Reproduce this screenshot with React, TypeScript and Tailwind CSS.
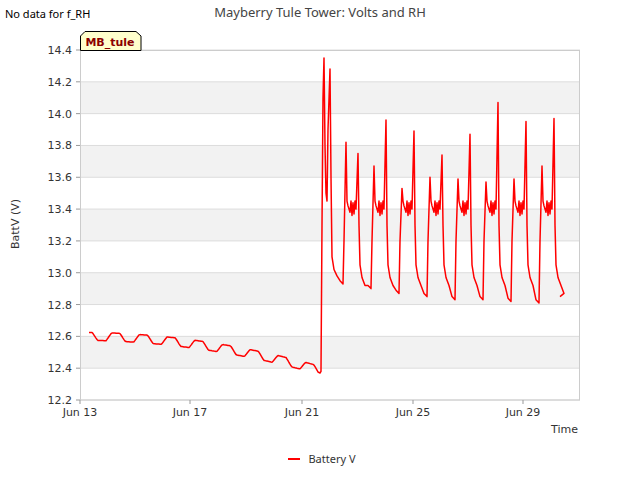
export default function App() {
  const Y = (v: number) => 400 - (v - 12.2) * (350 / 2.2);
  const pts: [number, number][] = [];
  for (let x = 89; x <= 318; x += 1) {
    const t = (x - 89) / (318 - 89);
    const base = 12.6 - 0.19 * t * t - 0.02 * t;
    const s = Math.sin(((x - 89) / 27.7) * 2 * Math.PI + 1.8);
    const w = 0.025 * Math.max(-0.6, Math.min(0.6, s)) / 0.6;
    pts.push([x, base + w]);
  }
  pts.push([320, 12.37], [321, 12.38], [322, 13.3], [323, 14.1], [324, 14.35], [325, 13.8], [326, 13.5], [327, 13.45], [328, 13.9], [330, 14.28], [331, 13.6], [332, 13.1], [334, 13.02], [337, 12.98], [340, 12.95], [343, 12.93]);
  const mins = [343, 371, 399, 427, 455, 483, 511, 539];
  const A = [13.82, 13.67, 13.53, 13.6, 13.59, 13.57, 13.59, 13.67];
  const B = [13.75, 13.96, 13.89, 13.74, 13.87, 14.07, 13.95, 13.97];
  const lows = [12.9, 12.87, 12.85, 12.83, 12.83, 12.82, 12.81, 12.85];
  mins.forEach((m, i) => {
    pts.push([m + 1, 13.2], [m + 3, A[i]], [m + 4, 13.45], [m + 5, 13.42], [m + 7, 13.38], [m + 8, 13.45], [m + 9, 13.36], [m + 10, 13.44], [m + 11, 13.37], [m + 12, 13.45], [m + 13, 13.4], [m + 15, B[i]], [m + 16, 13.3], [m + 17, 13.05], [m + 19, 12.97], [m + 22, 12.92], [m + 25, lows[i] + 0.02], [Math.min(m + 28, 560), lows[i]]);
  });
  const d = pts.map((p, i) => `${i ? "L" : "M"}${p[0]} ${Y(p[1]).toFixed(1)}`).join(" ");
  const ticks = [12.2, 12.4, 12.6, 12.8, 13.0, 13.2, 13.4, 13.6, 13.8, 14.0, 14.2, 14.4];
  const bands = [12.4, 12.8, 13.2, 13.6, 14.0];
  const xt: [number, string][] = [[80, "Jun 13"], [190, "Jun 17"], [302, "Jun 21"], [413, "Jun 25"], [523, "Jun 29"]];
  return (
    <div className="w-[640px] h-[480px] bg-white flex flex-col font-['DejaVu_Sans',sans-serif]">
      <div className="relative h-[24px] flex justify-center pt-[3px]">
        <span className="absolute left-[5px] top-[6px] text-[11px] text-black">No data for f_RH</span>
        <span className="text-[13px] text-[#444]">Mayberry Tule Tower: Volts and RH</span>
      </div>
      <svg width="640" height="424" viewBox="0 24 640 424" fontFamily="DejaVu Sans, sans-serif">
        {bands.map((b) => (
          <rect key={b} x={80} y={Y(b + 0.2)} width={500} height={Y(b) - Y(b + 0.2)} fill="#f2f2f2" />
        ))}
        {ticks.map((t) => (
          <g key={t}>
            <line x1={80} x2={580} y1={Y(t)} y2={Y(t)} stroke="#dcdcdc" strokeWidth={1} />
            <line x1={76} x2={80} y1={Y(t)} y2={Y(t)} stroke="#999" />
            <text x={72} y={Y(t) + 4} fontSize={11} textAnchor="end" fill="#333">{t.toFixed(1)}</text>
          </g>
        ))}
        <rect x={80.5} y={50.5} width={499} height={349.5} fill="none" stroke="#ccc" />
        {xt.map(([x, l]) => (
          <g key={l}>
            <line x1={x} x2={x} y1={400} y2={404} stroke="#999" />
            <text x={x} y={416} fontSize={11} textAnchor="middle" fill="#333">{l}</text>
          </g>
        ))}
        <path d={d} fill="none" stroke="#ff0000" strokeWidth={1.5} strokeLinejoin="round" />
        <path d="M80.5 50.5 V36 L85 31.5 H136 L141 36 V50.5 Z" fill="#ffffcc" stroke="#000" />
        <text x={110} y={46} fontSize={11} fontWeight="bold" textAnchor="middle" fill="#8b0000">MB_tule</text>
        <text x={19} y={224} fontSize={11} textAnchor="middle" fill="#333" transform="rotate(-90 19 224)">BattV (V)</text>
        <text x={578} y={433} fontSize={11} textAnchor="end" fill="#333">Time</text>
      </svg>
      <div className="flex items-center justify-center gap-2 h-[26px] pb-[4px] pl-[4px]">
        <span className="w-[12px] h-[2px] bg-[#ff0000]" />
        <span className="text-[11px] text-[#333]">Battery V</span>
      </div>
    </div>
  );
}
